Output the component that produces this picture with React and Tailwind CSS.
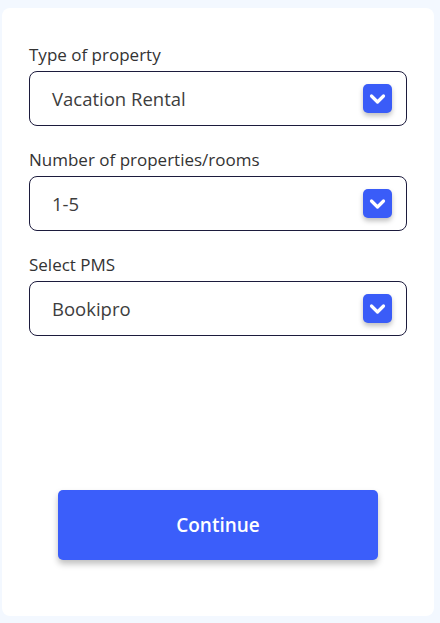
function Chevron() {
  return (
    <div className="h-[29px] w-[29px] rounded-[5px] bg-[#3a5cf8] shadow-[0_3px_5px_rgba(0,0,0,0.25)]">
      <svg width="29" height="29" viewBox="0 0 29 29" fill="none">
        <path d="M8.5 12l6 6 6-6" stroke="white" strokeWidth="3.2" strokeLinecap="round" strokeLinejoin="round" />
      </svg>
    </div>
  );
}

function SelectField({ label, value }) {
  return (
    <div>
      <div className="h-[20px] text-[17px] leading-[20px] text-[#333]">{label}</div>
      <div className="mt-[6px] flex h-[55px] items-center justify-between rounded-[8px] border border-[#1c1b3d] pl-[22px] pr-[14px]">
        <span className="text-[18.5px] text-[#3d3d3d]">{value}</span>
        <Chevron />
      </div>
    </div>
  );
}

export default function App() {
  return (
    <div className="h-[623px] w-[440px] bg-[#f3f8ff] pt-[8px] pl-[2px]" style={{ fontFamily: '"Open Sans", "Noto Sans", sans-serif' }}>
      <div className="flex h-[608px] w-[432px] flex-col rounded-[8px] bg-white px-[27px] pt-[37px]">
        <div className="flex flex-col gap-[24px]">
          <SelectField label="Type of property" value="Vacation Rental" />
          <SelectField label="Number of properties/rooms" value="1-5" />
          <SelectField label="Select PMS" value="Bookipro" />
        </div>
        <div className="mt-[154px] flex justify-center">
          <button className="h-[70px] w-[320px] rounded-[5px] bg-[#3b5efa] text-[19px] font-semibold text-white shadow-[0_4px_6px_rgba(0,0,0,0.25)]">
            Continue
          </button>
        </div>
      </div>
    </div>
  );
}
